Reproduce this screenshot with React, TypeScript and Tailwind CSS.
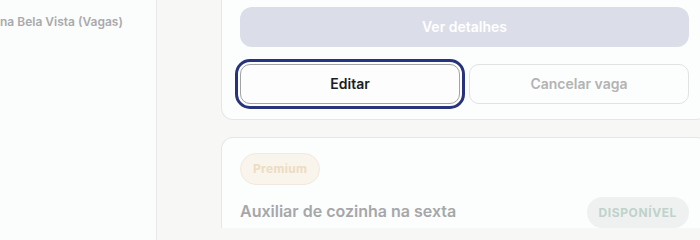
export default function App() {
  return (
    <div className="flex h-[240px] w-[700px] overflow-hidden bg-[#f7f7f6] font-['Inter',sans-serif]">
      {/* Sidebar */}
      <aside className="w-[157px] shrink-0 overflow-hidden border-r border-[#e8e8e8] bg-[#fbfcfc]">
        <p className="mt-[13px] whitespace-nowrap text-[12px] font-semibold text-[#a9aaab]">
          na Bela Vista (Vagas)
        </p>
      </aside>

      {/* Main */}
      <main className="flex min-w-0 flex-1 flex-col gap-[17px] overflow-hidden pl-16">
        {/* Card (scrolled) */}
        <div className="w-[487px] shrink-0 rounded-b-xl border border-t-0 border-[#e6e6e6] bg-[#fcfdfd] px-[18px] pb-[15px] pt-[7px]">
          <button className="flex h-10 w-full items-center justify-center rounded-xl bg-[#dbdee9] text-sm font-semibold text-white">
            Ver detalhes
          </button>
          <div className="mt-[17px] grid grid-cols-2 gap-[9px]">
            <button className="flex h-10 items-center justify-center rounded-[10px] border border-[#a3a3a3] bg-[#fdfdfd] text-sm font-semibold text-[#1c1c1c] outline-[3px] outline-offset-2 outline-[#27347b] outline-solid">
              Editar
            </button>
            <button className="flex h-10 items-center justify-center rounded-[10px] border border-[#e2e2e2] bg-[#fcfdfd] text-sm font-semibold text-[#b3b3b3]">
              Cancelar vaga
            </button>
          </div>
        </div>

        {/* Next card */}
        <div className="w-[487px] shrink-0 rounded-t-xl border border-b-0 border-[#e6e6e6] bg-[#fcfdfd] px-[18px] pt-[15px]">
          <span className="inline-flex h-8 items-center rounded-full border border-[#f3eadd] bg-[#f9f4ec] px-3 text-[12px] font-bold tracking-wide text-[#ecdcc2]">
            Premium
          </span>
          <div className="mt-3 flex items-center justify-between">
            <h3 className="-mt-1 text-[16px] font-semibold text-[#a6a7a9]">Auxiliar de cozinha na sexta</h3>
            <span className="inline-flex h-[31px] items-center rounded-full bg-[#eef1f0] px-3 text-xs font-bold uppercase tracking-wider text-[#bfd2cb]">
              Disponível
            </span>
          </div>
        </div>
      </main>
    </div>
  );
}
